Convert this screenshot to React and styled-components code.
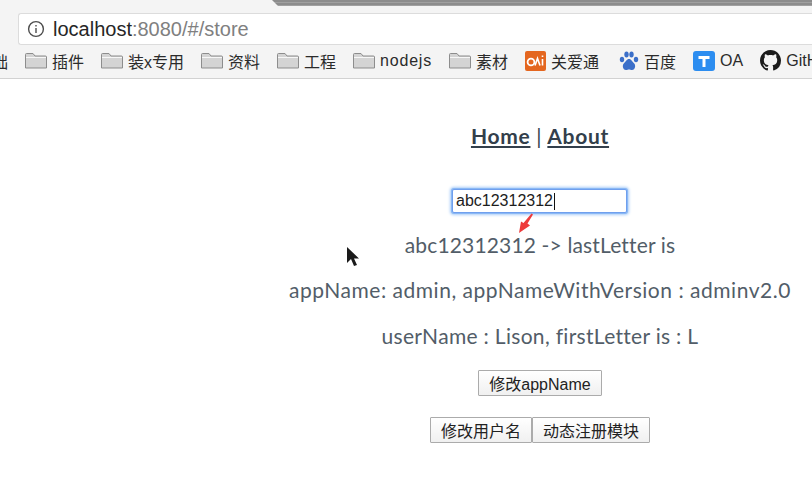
import React from "react";
import styled, { createGlobalStyle } from "styled-components";

const GlobalStyle = createGlobalStyle`
  html, body {
    margin: 0;
    padding: 0;
    background: #fff;
  }
  body {
    width: 812px;
    height: 492px;
    overflow: hidden;
  }
`;

const UI_FONT = `"Liberation Sans", "Noto Sans CJK SC", sans-serif`;
const PAGE_FONT = `Lato, "Noto Sans CJK SC", sans-serif`;

const Window = styled.div`
  position: relative;
  width: 812px;
  height: 492px;
  overflow: hidden;
`;

const Chrome = styled.header`
  height: 78px;
  background: #f4f4f4;
  border-bottom: 1px solid #d2d2d2;
  font-family: ${UI_FONT};
`;

const TabStrip = styled.div`
  height: 6px;
  margin-left: 272px;
  background: repeating-linear-gradient(#8c8c8c 0 2px, #a0a0a0 2px 3px);
  clip-path: polygon(0 0, 100% 0, 100% 100%, 6px 100%);
`;

const AddressRow = styled.div`
  display: flex;
  align-items: center;
  height: 32px;
  margin-top: 7px;
  padding-left: 18px;
`;

const AddressBar = styled.div`
  flex: 1;
  display: flex;
  align-items: center;
  gap: 8px;
  height: 30px;
  padding-left: 8px;
  background: #fff;
  border: 1px solid #dcdcdc;
  border-right: 0;
  border-radius: 3px 0 0 3px;
`;

const Url = styled.span`
  font-size: 20px;
  color: #808080;
`;

const Host = styled.span`
  color: #262626;
`;

const Bookmarks = styled.nav`
  display: flex;
  align-items: center;
  gap: 17px;
  height: 31px;
  margin-left: -8px;
  overflow: hidden;
  white-space: nowrap;
`;

const Bookmark = styled.div`
  display: flex;
  align-items: center;
  flex: none;
  gap: 5px;
  margin-right: ${(p) => p.$after || 0}px;
  font-size: 16px;
  letter-spacing: ${(p) => (p.$wide ? "0.8px" : "0")};
  color: #2b2b2b;
`;

const Main = styled.main`
  display: flex;
  flex-direction: column;
  align-items: center;
  margin-left: 268px;
  width: 544px;
  font-family: ${PAGE_FONT};
`;

const Nav = styled.div`
  margin-top: 44px;
  height: 26px;
  font-size: 21px;
  font-weight: 700;
  line-height: 26px;
  letter-spacing: 0.7px;
  color: #333f4b;
`;

const NavLink = styled.a`
  color: inherit;
  text-decoration: underline;
`;

const Divider = styled.span`
  font-weight: 400;
`;

const InputWrap = styled.div`
  position: relative;
  margin: 40px 1px 0 0;
`;

const TextInput = styled.input`
  display: block;
  box-sizing: border-box;
  width: 175px;
  height: 24px;
  padding: 0 3px;
  border: 1px solid #6f9fee;
  border-radius: 2px;
  outline: none;
  box-shadow: 0 0 0 1px #8ab8f5, 0 0 3px 2px #a9cdf8;
  font-family: ${UI_FONT};
  font-size: 16px;
  color: #1d1d1d;
`;

const Caret = styled.span`
  position: absolute;
  left: 102px;
  top: 4px;
  width: 1px;
  height: 17px;
  background: #111;
`;

const Line = styled.p`
  margin: ${(p) => p.$top}px 0 0;
  font-size: 21px;
  line-height: 26px;
  letter-spacing: ${(p) => p.$spacing}px;
  white-space: nowrap;
  color: #525d68;
`;

const ButtonRow = styled.div`
  display: flex;
  margin-top: ${(p) => p.$top}px;
`;

const Button = styled.button`
  box-sizing: border-box;
  height: 26px;
  padding: 0 10px;
  background: linear-gradient(#ffffff, #f0f0f0);
  border: 1px solid #ababab;
  border-radius: 1px;
  font-family: ${UI_FONT};
  font-size: 16px;
  color: #222;
`;

const Overlay = styled.svg`
  position: absolute;
  left: ${(p) => p.$x}px;
  top: ${(p) => p.$y}px;
`;

const InfoIcon = () => (
  <svg width="18" height="18" viewBox="0 0 18 18" fill="none" stroke="#4d4d4d" strokeWidth="1.4">
    <circle cx="9" cy="9" r="7.4" />
    <path d="M9 8v5M9 5v1.6" />
  </svg>
);

const FolderIcon = () => (
  <svg width="22" height="16" viewBox="0 0 22 16">
    <path d="M.5 15V1.5A1 1 0 0 1 1.5.5H8l2 2.5h10.5a1 1 0 0 1 1 1V15z" fill="#d4d4d4" stroke="#8d8d8d" />
    <path d="M1 4.500h20" stroke="#f7f7f7" />
  </svg>
);

const CareIcon = () => (
  <svg width="21" height="20" viewBox="0 0 21 20">
    <rect width="21" height="20" rx="2" fill="#e4661f" />
    <circle cx="6" cy="11" r="3.400" fill="none" stroke="#fff" strokeWidth="1.800" />
    <path d="M10 14.500 12.500 7.500 15 14.500M17.500 8v6.500M17.500 4.500v1.600" fill="none" stroke="#fff" strokeWidth="1.600" />
  </svg>
);

const BaiduIcon = () => (
  <svg width="20" height="20" viewBox="0 0 20 20" fill="#3b6fc9">
    <ellipse cx="3" cy="8.500" rx="2.200" ry="2.700" />
    <ellipse cx="7.500" cy="3.500" rx="2.200" ry="2.900" />
    <ellipse cx="12.500" cy="3.500" rx="2.200" ry="2.900" />
    <ellipse cx="17" cy="8.500" rx="2.200" ry="2.700" />
    <path d="M10 8c-2.400 0-3 2.600-5 4.200C3 14 3.600 19 7 19c1.300 0 2-.5 3-.5s1.700.5 3 .5c3.400 0 4-5 2-6.800C13 10.600 12.400 8 10 8z" />
  </svg>
);

const OaIcon = () => (
  <svg width="22" height="20" viewBox="0 0 22 20">
    <rect width="22" height="20" rx="3" fill="#2c8df0" />
    <path d="M5.500 5h11v3h-4v8h-3V8h-4z" fill="#fff" />
  </svg>
);

const GithubIcon = () => (
  <svg width="21" height="21" viewBox="0 0 16 16" fill="#1b1b1b">
    <path d="M8 0C3.580 0 0 3.580 0 8c0 3.540 2.290 6.530 5.470 7.590.4.070.55-.17.55-.38 0-.19-.01-.82-.01-1.490-2.010.37-2.530-.49-2.690-.94-.09-.23-.48-.94-.82-1.130-.28-.15-.68-.52-.01-.53.63-.01 1.080.58 1.230.82.720 1.210 1.870.87 2.330.66.070-.52.280-.87.510-1.070-1.780-.2-3.640-.89-3.640-3.950 0-.87.310-1.590.820-2.150-.08-.2-.36-1.020.08-2.120 0 0 .67-.21 2.200.82.640-.18 1.320-.27 2-.27s1.360.09 2 .27c1.530-1.040 2.200-.82 2.200-.82.440 1.100.160 1.920.080 2.120.510.560.820 1.270.820 2.150 0 3.070-1.870 3.750-3.650 3.950.290.250.540.730.540 1.480 0 1.070-.01 1.930-.01 2.200 0 .210.150.460.550.380A8.013 8.013 0 0 0 16 8c0-4.420-3.580-8-8-8z" />
  </svg>
);

const bookmarks = [
  { label: "础" },
  { label: "插件", icon: <FolderIcon /> },
  { label: "装x专用", icon: <FolderIcon /> },
  { label: "资料", icon: <FolderIcon /> },
  { label: "工程", icon: <FolderIcon /> },
  { label: "nodejs", icon: <FolderIcon />, wide: true },
  { label: "素材", icon: <FolderIcon /> },
  { label: "关爱通", icon: <CareIcon />, after: 3 },
  { label: "百度", icon: <BaiduIcon /> },
  { label: "OA", icon: <OaIcon /> },
  { label: "GitHub", icon: <GithubIcon /> }
];

const App = () => {
  return (
    <Window>
      <GlobalStyle />
      <Chrome>
        <TabStrip />
        <AddressRow>
          <AddressBar>
            <InfoIcon />
            <Url>
              <Host>localhost</Host>:8080/#/store
            </Url>
          </AddressBar>
        </AddressRow>
        <Bookmarks>
          {bookmarks.map((b) => (
            <Bookmark key={b.label} $wide={b.wide} $after={b.after}>
              {b.icon}
              {b.label}
            </Bookmark>
          ))}
        </Bookmarks>
      </Chrome>
      <Main>
        <Nav>
          <NavLink>Home</NavLink> <Divider>|</Divider> <NavLink>About</NavLink>
        </Nav>
        <InputWrap>
          <TextInput defaultValue="abc12312312" />
          <Caret />
        </InputWrap>
        <Line $top={19} $spacing={0.15}>abc12312312 -&gt; lastLetter is</Line>
        <Line $top={19} $spacing={0.52}>appName: admin, appNameWithVersion : adminv2.0</Line>
        <Line $top={20} $spacing={0.31}>userName : Lison, firstLetter is : L</Line>
        <ButtonRow $top={21}>
          <Button>修改appName</Button>
        </ButtonRow>
        <ButtonRow $top={21}>
          <Button>修改用户名</Button>
          <Button>动态注册模块</Button>
        </ButtonRow>
      </Main>
      {/* red annotation arrow drawn over the video */}
      <Overlay $x={517} $y={213} width="20" height="22" viewBox="0 0 20 22">
        <path d="M16 1.500 10.500 10.500 13 12.500 2 20 4 8.500 6.500 10 14.500.5z" fill="#ee3b3b" />
      </Overlay>
      {/* mouse pointer */}
      <Overlay $x={345} $y={246} width="16" height="22" viewBox="0 0 16 22">
        <path d="M2 1v16l4-4 3 7 3-1-3-6.500h5z" fill="#1a1a1a" />
      </Overlay>
    </Window>
  );
};

export default App;
